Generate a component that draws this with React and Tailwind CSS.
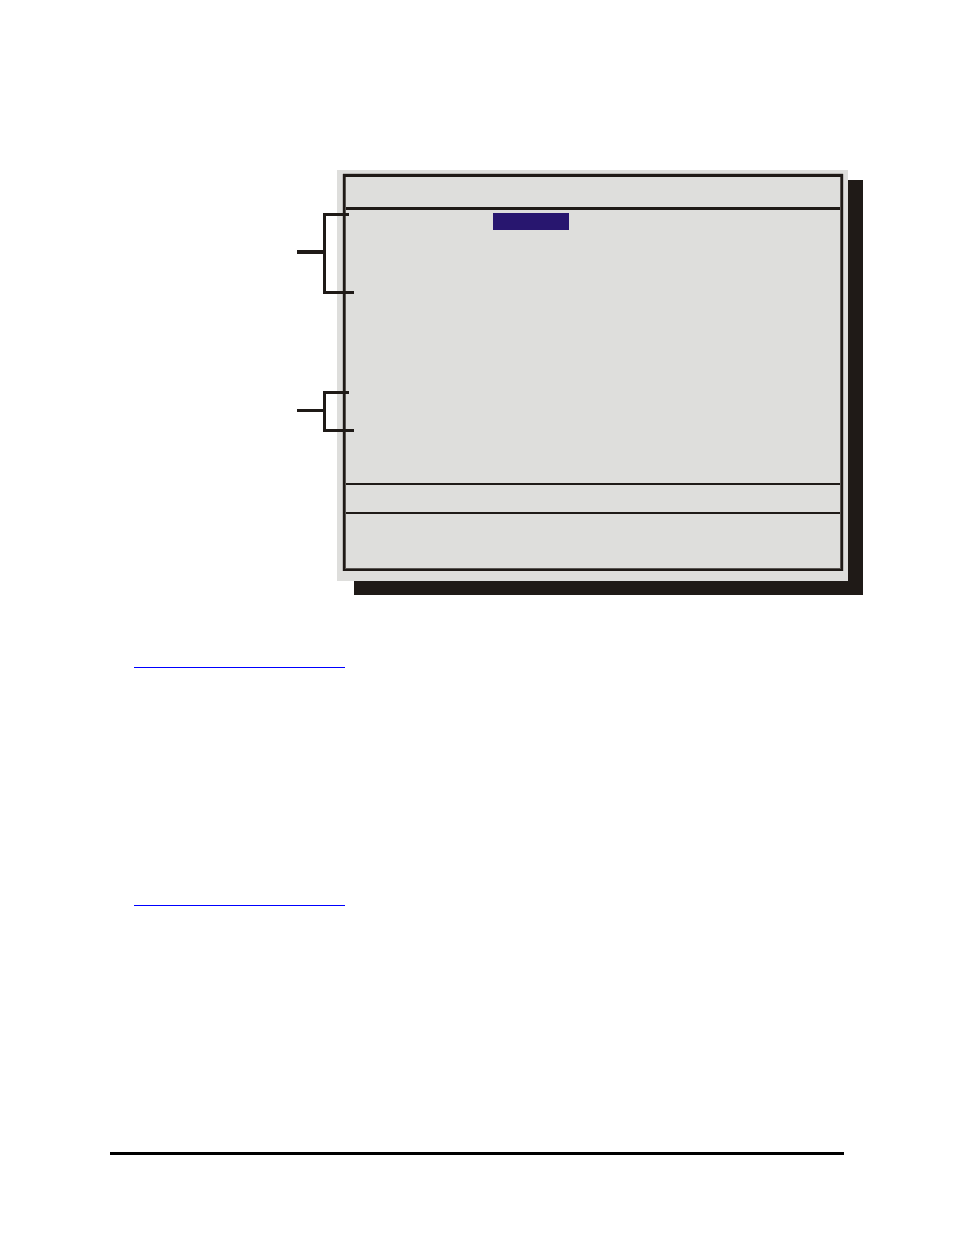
import React from 'react'

const callouts = [
  { id: 'upper', height: 81, stubTop: 37, stubHeight: 4 },
  { id: 'lower', height: 41, stubTop: 18, stubHeight: 3 },
]

// Bracket that points from the margin into the setup screen
function Bracket({ height, stubTop, stubHeight }) {
  return (
    <svg width="57" height={height} viewBox={`0 0 57 ${height}`} fill="#1f1a17" shapeRendering="crispEdges" aria-hidden="true">
      <rect x="0" y={stubTop} width="27" height={stubHeight} />
      <rect x="26" y="0" width="3" height={height} />
      <rect x="26" y="0" width="26" height="3" />
      <rect x="26" y={height - 3} width="31" height="3" />
    </svg>
  )
}

function SetupScreen() {
  return (
    <div className="flex-1 relative pr-[15px] pb-[14px]">
      {/* Drop shadow */}
      <div className="absolute top-[10px] left-[17px] right-0 bottom-0 bg-[#1f1a17]" />

      <div className="relative bg-[#dededc] pt-1 px-[5px] pb-[10px] pl-[6px]">
        <div className="border-2 border-t-3 border-[#1f1a17] shadow-[-1px_0_0_#b9b8b6,1px_0_0_#b9b8b6,0_-1px_0_#b9b8b6]">
          <div className="border-x border-b border-[#5a5653]">
            <div className="h-[33px] border-b-3 border-[#1f1a17]" />
            <div className="h-[273px] pt-[3px]">
              <div className="ml-[147px] w-[76px] h-[17px] bg-[#28166f]" />
            </div>
            <div className="h-[31px] border-y-2 border-[#1f1a17]" />
            <div className="h-[54px]" />
          </div>
        </div>
      </div>
    </div>
  )
}

export default function App() {
  return (
    <main className="min-h-screen bg-white pt-[170px] pb-20">
      <figure className="flex items-start ml-[297px] mr-[91px]">
        <div className="relative z-10 flex flex-col gap-[97px] mt-[43px] -mr-[17px]">
          {callouts.map(({ id, ...callout }) => (
            <Bracket key={id} {...callout} />
          ))}
        </div>
        <SetupScreen />
      </figure>

      {/* Section rules */}
      <div className="ml-[134px] mt-[72px] w-[211px]">
        <hr className="border-t border-[#0000ff]" />
        <hr className="mt-[237px] border-t border-[#0000ff]" />
      </div>

      <footer className="mx-[110px] mt-[246px] border-t-3 border-black" />
    </main>
  )
}
